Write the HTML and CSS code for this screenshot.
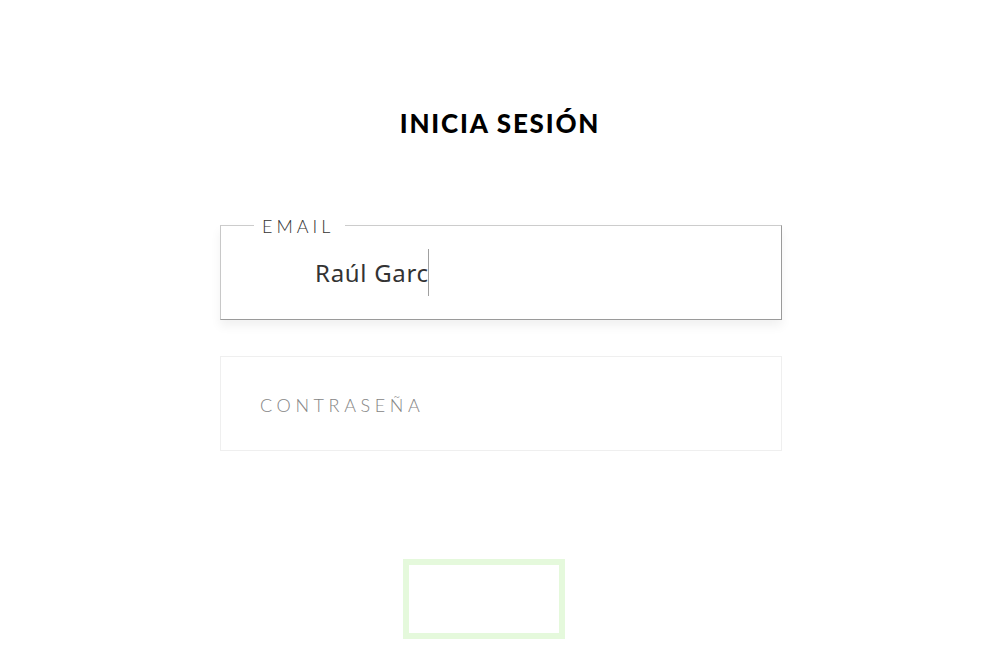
FILE: index.html
```html
<!DOCTYPE html>
<html lang="es">
<head>
<meta charset="utf-8">
<title>Inicia sesión</title>
<link rel="stylesheet" href="styles.css">
</head>
<body>
<main class="page">
  <h1 class="title">INICIA SESIÓN</h1>
  <form class="form">
    <div class="field field-active">
      <span class="field-legend">EMAIL</span>
      <div class="field-value"><span class="value-text">Raúl Garc</span><span class="caret"></span></div>
    </div>
    <div class="field field-idle">
      <span class="field-placeholder">CONTRASEÑA</span>
    </div>
    <div class="actions">
      <button type="button" class="submit"></button>
    </div>
  </form>
</main>
</body>
</html>
```

FILE: styles.css
```css
html, body {
  margin: 0;
  padding: 0;
  background: #ffffff;
}

.page {
  width: 1000px;
  padding-top: 106px;
  font-family: Lato, "Noto Sans", sans-serif;
}

.title {
  margin: 0;
  text-align: center;
  font-family: Lato, sans-serif;
  font-weight: 900;
  font-size: 26px;
  line-height: 34px;
  letter-spacing: 1.8px;
  color: #000000;
}

.form {
  margin: 85px 0 0 220px;
  width: 562px;
  display: flex;
  flex-direction: column;
}

.field {
  box-sizing: border-box;
  width: 562px;
  height: 95px;
  margin: 0;
}

.field-active {
  position: relative;
  padding: 23px 0 0 94px;
  border-style: solid;
  border-width: 1px;
  border-color: #cccccc #9a9a9a #9a9a9a #c8c8c8;
  box-shadow: 0 6px 10px rgba(0, 0, 0, 0.06);
}

.field-legend {
  position: absolute;
  top: -10px;
  left: 33px;
  padding: 0 11px 0 8px;
  background: #ffffff;
  font-family: Lato, sans-serif;
  font-weight: 300;
  font-size: 18px;
  line-height: 20px;
  letter-spacing: 4px;
  color: #333333;
}

.field-value {
  display: flex;
  height: 47px;
  line-height: 47px;
}

.value-text {
  font-family: "Noto Sans", sans-serif;
  font-size: 24px;
  color: #333333;
  letter-spacing: 0.7px;
}

.caret {
  width: 1px;
  height: 47px;
  margin-left: -0.7px;
  background: #a0a0a0;
}

.field-idle {
  margin-top: 36px;
  border: 1px solid #efefef;
  display: flex;
  align-items: center;
  padding-left: 39px;
}

.field-placeholder {
  font-family: Lato, sans-serif;
  font-weight: 300;
  font-size: 18px;
  letter-spacing: 4.6px;
  color: #858585;
  padding-top: 2px;
}

.actions {
  margin-top: 108px;
  padding-left: 183px;
}

.submit {
  display: block;
  box-sizing: border-box;
  width: 162px;
  height: 80px;
  background: #ffffff;
  border: 6px solid #e5f9dc;
  padding: 0;
  margin: 0;
}
```
